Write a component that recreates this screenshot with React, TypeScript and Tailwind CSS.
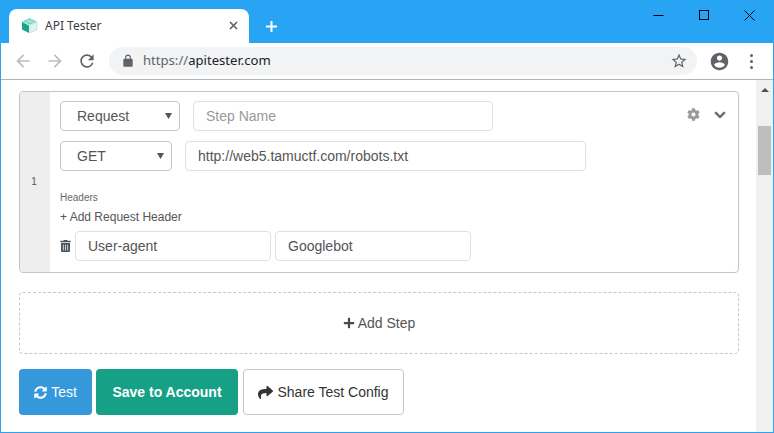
import React from 'react';
import { FaCog, FaChevronDown, FaTrashAlt, FaPlus, FaSyncAlt, FaShare } from 'react-icons/fa';

const SelectBox: React.FC<{ label: string; width: string }> = ({ label, width }) => (
  <div className={`relative flex h-[30px] ${width} shrink-0 items-center rounded border border-[#c8c8c8] bg-white pl-4 text-sm text-[#555]`}>
    {label}
    <svg className="absolute right-[7px] top-[11px] h-[6px] w-[7px]" viewBox="0 0 7 6">
      <path d="M0 0H7L3.5 6Z" fill="#555" />
    </svg>
  </div>
);

const TextField: React.FC<{ value?: string; placeholder?: string; width: string }> = ({
  value,
  placeholder,
  width,
}) => (
  <input
    readOnly
    value={value}
    placeholder={placeholder}
    className={`h-[30px] ${width} shrink-0 rounded border border-[#e0e0e0] bg-white pl-3 text-sm text-[#555] outline-none placeholder:text-[#999]`}
  />
);

const ChromeIcon: React.FC<{ d: string; className: string; fill: string }> = ({ d, className, fill }) => (
  <svg className={className} viewBox="0 0 24 24" fill={fill}>
    <path d={d} />
  </svg>
);

export default function App() {
  return (
    <div className="flex h-[433px] w-[774px] flex-col overflow-hidden border-x border-b border-[#2ba3f3] bg-white font-['Liberation_Sans',Arial,sans-serif]">
      {/* window title bar */}
      <div className="flex h-[43px] shrink-0 items-end bg-[#28a4f4]">
        <div className="ml-2 flex h-[34px] w-[240px] items-center rounded-t-lg bg-white pb-[1px] pl-[12px] pr-[11px]">
          <svg className="h-[17px] w-[17px] shrink-0" viewBox="0 0 17 17">
            <path d="M8.5 1L16 4.5L8.5 8L1 4.5Z" fill="#7fd8c4" />
            <path d="M5 2.8L12.5 6.3M12 2.8L4.5 6.3" stroke="#c5eee4" strokeWidth="0.7" />
            <path d="M1 5L8 8.5V16L1 12.5Z" fill="#1ba588" />
            <path d="M16 5L9 8.5V16L16 12.5Z" fill="#e4f3ef" stroke="#9fd8cb" strokeWidth="0.6" />
          </svg>
          <span className="ml-[7px] flex-1 font-['Noto_Sans',sans-serif] text-xs text-[#3c4043]">API Tester</span>
          <svg className="h-[9px] w-[9px]" viewBox="0 0 9 9" stroke="#5f6368" strokeWidth="1.7">
            <path d="M1 1L8 8M8 1L1 8" />
          </svg>
        </div>
        <svg className="mb-[10px] ml-[16px] h-[13px] w-[13px]" viewBox="0 0 13 13" stroke="#fff" strokeWidth="2">
          <path d="M6.5 1V12M1 6.5H12" />
        </svg>
        <div className="mb-[18px] ml-auto flex h-[20px] items-center gap-[35px] pr-[18px]">
          <svg className="h-[10px] w-[11px]" viewBox="0 0 11 10" stroke="#000" strokeWidth="1">
            <path d="M0.5 5.5H10.5" />
          </svg>
          <svg className="h-[10px] w-[10px]" viewBox="0 0 10 10" stroke="#000" strokeWidth="1" fill="none">
            <rect x="0.5" y="0.5" width="9" height="9" />
          </svg>
          <svg className="h-[11px] w-[11px]" viewBox="0 0 11 11" stroke="#000" strokeWidth="1">
            <path d="M0.5 0.5L10.5 10.5M10.5 0.5L0.5 10.5" />
          </svg>
        </div>
      </div>

      {/* browser toolbar */}
      <div className="flex h-[37px] shrink-0 items-center border-b border-[#b4b4b4] bg-white">
        <ChromeIcon
          className="ml-[12px] h-[20px] w-[20px]"
          fill="#bdbdbd"
          d="M20 11H7.83l5.59-5.59L12 4l-8 8 8 8 1.41-1.41L7.83 13H20v-2z"
        />
        <ChromeIcon
          className="ml-[12px] h-[20px] w-[20px]"
          fill="#bdbdbd"
          d="M12 4l-1.41 1.41L16.17 11H4v2h12.17l-5.58 5.59L12 20l8-8z"
        />
        <ChromeIcon
          className="ml-[12px] h-[20px] w-[20px]"
          fill="#5f6368"
          d="M17.65 6.35A7.958 7.958 0 0 0 12 4c-4.42 0-7.99 3.58-7.99 8s3.57 8 7.99 8c3.73 0 6.84-2.55 7.73-6h-2.08A5.99 5.99 0 0 1 12 18c-3.31 0-6-2.69-6-6s2.69-6 6-6c1.66 0 3.14.69 4.22 1.78L13 11h7V4l-2.35 2.35z"
        />
        <div className="ml-[12px] flex h-[28px] w-[588px] items-center rounded-full bg-[#f1f3f4] pl-[12px] pr-[9px]">
          <ChromeIcon
            className="h-[14px] w-[14px]"
            fill="#5f6368"
            d="M18 8h-1V6c0-2.76-2.24-5-5-5S7 3.24 7 6v2H6c-1.1 0-2 .9-2 2v10c0 1.1.9 2 2 2h12c1.1 0 2-.9 2-2V10c0-1.1-.9-2-2-2zM9 6c0-1.66 1.34-3 3-3s3 1.34 3 3v2H9V6z"
          />
          <span className="ml-[8px] flex-1 font-['Noto_Sans',sans-serif] text-[13.1px] text-[#5f6368]">
            https://<span className="text-[#202124]">apitester.com</span>
          </span>
          <ChromeIcon
            className="h-[18px] w-[18px]"
            fill="#5f6368"
            d="M22 9.24l-7.19-.62L12 2 9.19 8.63 2 9.24l5.46 4.73L5.82 21 12 17.27 18.18 21l-1.63-7.03L22 9.24zM12 15.4l-3.76 2.27 1-4.28-3.32-2.88 4.38-.38L12 6.1l1.71 4.04 4.38.38-3.32 2.88 1 4.28L12 15.4z"
          />
        </div>
        <ChromeIcon
          className="ml-[12px] h-[21px] w-[21px]"
          fill="#5f6368"
          d="M12 2C6.48 2 2 6.48 2 12s4.48 10 10 10 10-4.48 10-10S17.52 2 12 2zm0 3c1.66 0 3 1.34 3 3s-1.34 3-3 3-3-1.34-3-3 1.34-3 3-3zm0 14.2c-2.5 0-4.71-1.28-6-3.22.03-1.99 4-3.08 6-3.08 1.99 0 5.97 1.09 6 3.08-1.29 1.94-3.5 3.22-6 3.22z"
        />
        <div className="ml-[20px] flex flex-col gap-[3px]">
          <span className="h-[3px] w-[3px] rounded-full bg-[#5f6368]" />
          <span className="h-[3px] w-[3px] rounded-full bg-[#5f6368]" />
          <span className="h-[3px] w-[3px] rounded-full bg-[#5f6368]" />
        </div>
      </div>

      {/* page */}
      <div className="flex min-h-0 flex-1">
        <main className="min-w-0 flex-1 pl-[18px] pr-[17px] pt-[11px]">
          {/* step card */}
          <div className="flex h-[182px] overflow-hidden rounded border border-[#c4c4c4]">
            <div className="flex w-[30px] shrink-0 items-center justify-center bg-[#eee] pb-[2px] pr-[2px] text-[10px] text-[#555]">1</div>
            <div className="flex-1 pl-[10px] pt-[9px]">
              <div className="flex items-start">
                <SelectBox label="Request" width="w-[120px]" />
                <div className="ml-[13px]">
                  <TextField placeholder="Step Name" width="w-[300px]" />
                </div>
                <FaCog className="ml-auto mt-[7px] h-[13px] w-[13px] text-[#999]" />
                <FaChevronDown className="ml-[14px] mr-[12px] mt-[8px] h-[12px] w-[12px] text-[#6f6a5c]" stroke="currentColor" strokeWidth={30} />
              </div>
              <div className="mt-[10px] flex">
                <SelectBox label="GET" width="w-[112px]" />
                <div className="ml-[13px]">
                  <TextField value="http://web5.tamuctf.com/robots.txt" width="w-[401px]" />
                </div>
              </div>
              <div className="mt-[21px] text-[10px] leading-[12px] text-[#666]">Headers</div>
              <div className="mt-[6px] text-xs leading-[14px] text-[#555]">+ Add Request Header</div>
              <div className="mt-[7px] flex items-center">
                <FaTrashAlt className="h-[12px] w-[11px] shrink-0 text-[#4a5560]" />
                <div className="ml-[4px]">
                  <TextField value="User-agent" width="w-[196px]" />
                </div>
                <div className="ml-[4px]">
                  <TextField value="Googlebot" width="w-[196px]" />
                </div>
              </div>
            </div>
          </div>

          {/* add step */}
          <div className="mt-[19px] flex h-[62px] items-center justify-center rounded border border-dashed border-[#c8c8c8] text-sm text-[#555]">
            <FaPlus className="mr-[3px] h-[12px] w-[12px] text-[#4a4a4a]" />
            Add Step
          </div>

          {/* actions */}
          <div className="mt-[15px] flex">
            <button className="flex h-[46px] w-[73px] items-center justify-center rounded bg-[#3498db] text-sm text-white">
              <FaSyncAlt className="mr-[4px] h-[13px] w-[13px]" />
              Test
            </button>
            <button className="ml-[4px] h-[46px] w-[142px] rounded bg-[#16a085] text-sm font-bold text-white">
              Save to Account
            </button>
            <button className="ml-[5px] flex h-[46px] w-[161px] items-center justify-center rounded border border-[#c8c8c8] bg-white text-sm text-[#333]">
              <FaShare className="mr-[4px] h-[15px] w-[15px]" />
              Share Test Config
            </button>
          </div>
        </main>

        {/* scrollbar */}
        <div className="flex w-[17px] shrink-0 flex-col items-center bg-[#f0f0f0] pt-[8px]">
          <svg className="h-[4px] w-[8px]" viewBox="0 0 8 4">
            <path d="M0 4L4 0L8 4Z" fill="#505050" />
          </svg>
          <div className="mt-[34px] h-[49px] w-[13px] bg-[#bebebe]" />
        </div>
      </div>
    </div>
  );
}
